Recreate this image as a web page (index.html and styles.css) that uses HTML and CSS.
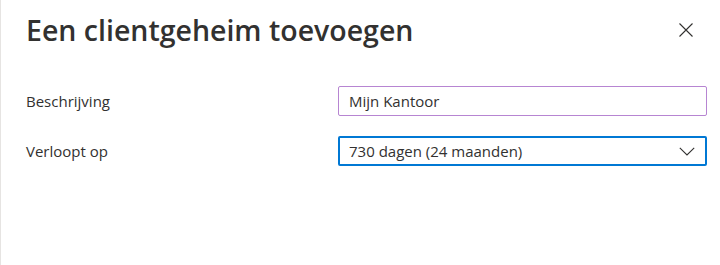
FILE: index.html
```html
<!DOCTYPE html>
<html lang="nl">
<head>
<meta charset="utf-8">
<title>Een clientgeheim toevoegen</title>
<link rel="stylesheet" href="styles.css">
</head>
<body>
<div class="panel">
  <div class="header">
    <h1 class="title">Een clientgeheim toevoegen</h1>
    <button class="close" aria-label="Sluiten">
      <svg width="14" height="14" viewBox="0 0 14 14"><path d="M0.5 0.5 L13.5 13.5 M13.5 0.5 L0.5 13.5" stroke="#323130" stroke-width="1.1" fill="none"/></svg>
    </button>
  </div>
  <div class="form">
    <label class="label" for="desc">Beschrijving</label>
    <div class="input hover"><span class="value" id="desc">Mijn Kantoor</span></div>
    <label class="label">Verloopt op</label>
    <div class="input select">
      <span class="value">730 dagen (24 maanden)</span>
      <svg class="chev" width="16" height="9" viewBox="0 0 16 9"><path d="M0.8 0.8 L8 8 L15.2 0.8" stroke="#323130" stroke-width="1.1" fill="none"/></svg>
    </div>
  </div>
</div>
</body>
</html>
```
FILE: styles.css
```css
html, body {
  margin: 0;
  padding: 0;
  background: #ffffff;
}
body {
  font-family: "Open Sans", "Noto Sans", "Liberation Sans", sans-serif;
  color: #323130;
}
.panel {
  height: 265px;
  box-sizing: border-box;
  border-left: 1px solid #e6e4e2;
  padding: 0 13px 0 25px;
}
.header {
  display: flex;
  justify-content: space-between;
  align-items: center;
  height: 60px;
}
.title {
  margin: 0;
  font-size: 28.5px;
  font-weight: 600;
  letter-spacing: 0;
  color: #323130;
}
.close {
  border: 0;
  background: none;
  padding: 0;
  margin-right: 14px;
  width: 14px;
  height: 14px;
  display: flex;
}
.form {
  display: grid;
  grid-template-columns: 312px 369px;
  row-gap: 20px;
  margin-top: 26px;
}
.label {
  font-size: 15px;
  display: flex;
  align-items: center;
  height: 30px;
  color: #323130;
}
.input {
  height: 30px;
  box-sizing: border-box;
  border: 1px solid #b785d2;
  border-radius: 2px;
  display: flex;
  align-items: center;
  justify-content: space-between;
  padding: 0 10px;
  font-size: 15px;
}
.select {
  border: 2px solid #0078d4;
  padding: 0 10px 0 9px;
}
.chev {
  display: block;
}
```
